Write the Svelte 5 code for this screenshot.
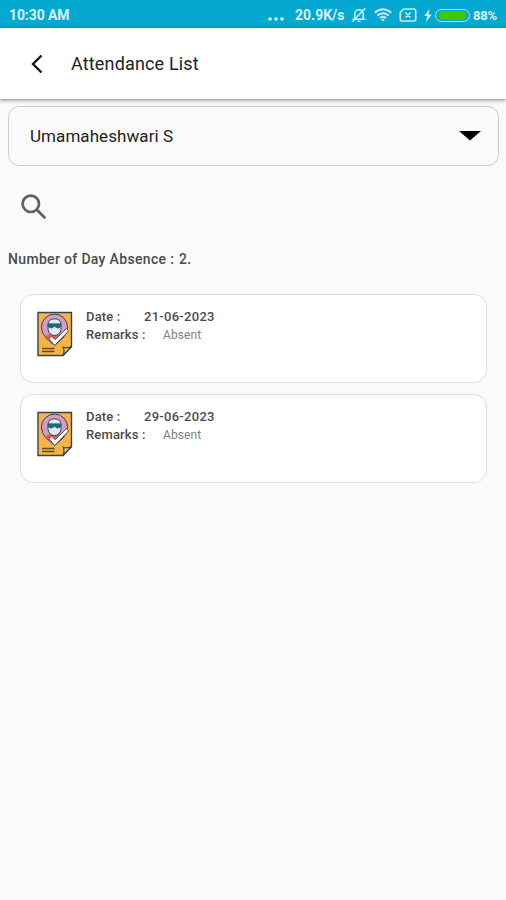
<script>
  let student = "Umamaheshwari S";
  let absences = [
    { date: "21-06-2023", remarks: "Absent" },
    { date: "29-06-2023", remarks: "Absent" },
  ];
</script>

<div class="screen">
  <div class="status">
    <span class="time">10:30 AM</span>
    <svg class="dots" width="16" height="4" viewBox="0 0 16 4">
      <circle cx="2" cy="2" r="1.8" />
      <circle cx="8" cy="2" r="1.8" />
      <circle cx="14" cy="2" r="1.8" />
    </svg>
    <span class="speed">20.9K/s</span>
    <svg class="line bell" width="16" height="16" viewBox="0 0 16 16">
      <path d="M1.5 12.3h13M3.8 12V7a4.2 4.2 0 0 1 8.4 0v5M6.5 14.2h3M14.2 1.2 1.6 14.5" />
    </svg>
    <svg class="line wifi" width="18" height="14" viewBox="0 0 18 14">
      <path d="M.8 4.8Q9-2.2 17.2 4.8M3.4 7.5q5.6-4.7 11.2 0M5.9 10q3.1-2.6 6.2 0" />
      <path class="solid" d="M7 11.3q2-1.3 4 0L9 13.6z" />
    </svg>
    <svg class="line sim" width="18" height="14" viewBox="0 0 18 14">
      <path d="M4.7 1H15a1.7 1.7 0 0 1 1.7 1.7v8.6A1.7 1.7 0 0 1 15 13H3a1.7 1.7 0 0 1-1.7-1.7V4.4zM6.3 4.5l5.4 5M11.7 4.5l-5.4 5" />
    </svg>
    <svg class="bolt" width="8" height="13" viewBox="0 0 8 13">
      <path d="M5.6 0 .2 7h3L2 13l5.8-7.6H4.5z" />
    </svg>
    <div class="battery"><div class="charge"></div></div>
    <span class="percent">88%</span>
  </div>

  <header>
    <svg class="back" width="12" height="20" viewBox="0 0 12 20">
      <path d="M10.5 1.5 2 10l8.5 8.5" />
    </svg>
    <h1>Attendance List</h1>
  </header>

  <main>
    <div class="select">
      <span>{student}</span>
      <svg width="22" height="10" viewBox="0 0 22 10">
        <path d="M0 0h22L11 9.5z" />
      </svg>
    </div>

    <svg class="search" width="26" height="26" viewBox="0 0 26 26">
      <circle cx="9.8" cy="9.8" r="8.2" />
      <path d="m15.8 15.8 8.5 8.5" />
    </svg>

    <p class="total">Number of Day Absence : <span>{absences.length}.</span></p>

    <div class="list">
      {#each absences as absence}
        <div class="card">
          <svg class="sheet" width="36" height="46" viewBox="0 0 36 46">
            <path class="paper" d="M1 1.5h33.5v34L26 44.5H1z" />
            <path class="pin" d="M17.5 34.5 9 27Q4.4 22 4.4 16.2a13.1 13.1 0 0 1 26.2 0q0 5.8-4.6 10.8z" />
            <path class="scarf" d="M8 25.5q2.5-2.3 6-2.5h7q2.500.2 4 2l-8 7.5-3-4-2 1.5z" />
            <path class="face" d="M11 14q0-6.200 6.500-6.200t6.500 6.200v4.500q-1.300 6-6.500 6t-6.500-6z" />
            <path class="shades" d="M11.200 12.800h12.600v2.200q-.8 2.300-3.200 2-2-.2-3.100-2-1.100 1.800-3.100 2-2.400.3-3.200-2z" />
            <path class="check" d="m11.8 27.700 2.600-2.500 3.800 3.400L29.500 17.500l2 2.500-13.800 14.500z" />
            <path class="rule" d="M5 37.500h12.500M5 40.500h12.500" />
            <path class="fold" d="M26 44.500q2-4.500.2-8.200 4 1.500 8.300-.8z" />
          </svg>
          <div class="details">
            <div class="row">
              <span class="label date-label">Date :</span>
              <span class="date">{absence.date}</span>
            </div>
            <div class="row">
              <span class="label remarks-label">Remarks :</span>
              <span class="remarks">{absence.remarks}</span>
            </div>
          </div>
        </div>
      {/each}
    </div>
  </main>
</div>

<style>
  :global(body) {
    background: #fafafa;
  }
  .screen {
    min-height: 900px;
    font-family: Roboto, sans-serif;
    background: #fafafa;
    color: #222;
  }
  .status {
    display: flex;
    align-items: center;
    height: 28px;
    padding: 2px 8px 0 9px;
    box-sizing: border-box;
    background: #05a8d1;
    color: #d8f4fb;
    font-size: 14px;
    font-weight: 700;
    white-space: nowrap;
  }
  .status svg {
    flex: none;
    fill: #d8f4fb;
  }
  .status .line {
    fill: none;
    stroke: #c8eef8;
    stroke-width: 1.6;
  }
  .status .wifi {
    stroke-width: 1.9;
  }
  .status .solid {
    fill: #c8eef8;
    stroke: none;
  }
  .time {
    width: 62px;
    letter-spacing: -0.1px;
  }
  .status .dots {
    margin-left: auto;
    margin-top: 7px;
  }
  .speed {
    width: 50px;
    margin-left: 11px;
  }
  .bell {
    margin-left: 6px;
  }
  .wifi {
    margin-left: 7px;
  }
  .sim {
    margin-left: 7px;
  }
  .bolt {
    margin-left: 7px;
  }
  .battery {
    width: 35px;
    height: 13px;
    margin-left: 3px;
    padding: 1px 3px;
    box-sizing: border-box;
    border: 1.5px solid #a9e2f2;
    border-radius: 7px;
  }
  .charge {
    height: 100%;
    border-radius: 3px;
    background: #46c303;
  }
  .percent {
    width: 25px;
    margin-left: 3px;
    font-size: 13px;
    letter-spacing: -0.2px;
  }
  header {
    position: relative;
    display: flex;
    align-items: center;
    height: 71px;
    padding-left: 31px;
    box-sizing: border-box;
    background: #fff;
    box-shadow: 0 1px 4px rgba(0, 0, 0, 0.5);
  }
  .back {
    fill: none;
    stroke: #111;
    stroke-width: 2.3;
  }
  h1 {
    margin: 0 0 0 28px;
    font-size: 18px;
    font-weight: 400;
    letter-spacing: 0.16px;
  }
  main {
    padding: 7px 7px 0 8px;
  }
  .select {
    display: flex;
    align-items: center;
    justify-content: space-between;
    height: 60px;
    padding: 0 17px 1px 21px;
    box-sizing: border-box;
    border: 1.5px solid #cdcdcd;
    border-radius: 11px;
    font-size: 17px;
    letter-spacing: 0.07px;
  }
  .search {
    display: block;
    margin: 28px 0 0 13px;
    fill: none;
    stroke: #606060;
    stroke-width: 2.7;
  }
  .total {
    margin: 29px 0 0;
    font-size: 14px;
    font-weight: 500;
    line-height: 20px;
    letter-spacing: 0.33px;
    color: #4b4b4b;
  }
  .total span {
    margin-left: 1px;
  }
  .list {
    display: flex;
    flex-direction: column;
    gap: 11px;
    margin: 25px 12px 0;
  }
  .card {
    display: flex;
    height: 89px;
    padding: 16px 15px 0 16px;
    box-sizing: border-box;
    border: 1.5px solid #dedede;
    border-radius: 13px;
    background: #fff;
  }
  .sheet {
    flex: none;
    stroke: #34405a;
    stroke-width: 1;
  }
  .paper {
    fill: #f6b447;
    stroke-width: 1.4;
  }
  .pin {
    fill: #d39dc2;
  }
  .scarf {
    fill: #ee5945;
    stroke: none;
  }
  .face {
    fill: #dcebf4;
  }
  .shades {
    fill: #176f7c;
    stroke-width: 0.6;
  }
  .check {
    fill: #fff;
    stroke-width: 0.9;
  }
  .rule {
    fill: none;
    stroke: #5b4937;
    stroke-width: 1.4;
  }
  .fold {
    fill: #f8cd7c;
    stroke-width: 1.2;
  }
  .details {
    margin: -3px 0 0 13px;
  }
  .row {
    display: flex;
    height: 18px;
    line-height: 18px;
    font-size: 13px;
  }
  .label,
  .date {
    font-weight: 500;
    letter-spacing: 0.15px;
    color: #4b4b4b;
  }
  .date {
    letter-spacing: 0.28px;
  }
  .date-label {
    width: 58px;
  }
  .remarks-label {
    width: 77px;
  }
  .remarks {
    font-size: 12px;
    letter-spacing: 0.1px;
    color: #808080;
  }
</style>
